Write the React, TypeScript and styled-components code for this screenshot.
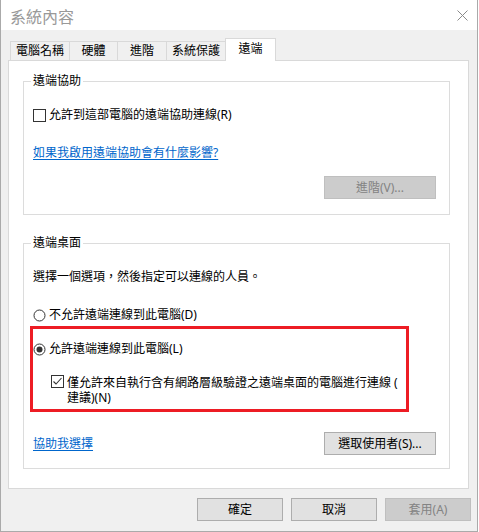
import React from "react";
import styled, { createGlobalStyle } from "styled-components";

const GlobalStyle = createGlobalStyle`
  *, *::before, *::after {
    box-sizing: border-box;
  }
  html, body {
    margin: 0;
    padding: 0;
    background: #ffffff;
  }
  body {
    font-family: "Noto Sans", "Noto Sans CJK TC", sans-serif;
    font-size: 12px;
    color: #000000;
  }
`;

const Window = styled.div`
  width: 478px;
  height: 532px;
  display: flex;
  flex-direction: column;
  border: 1px solid #aaaaaa;
  border-top: none;
  background: #f0f0f0;
`;

const TitleBar = styled.div`
  height: 30px;
  flex: none;
  display: flex;
  align-items: center;
  justify-content: space-between;
  padding: 0 9px 0 9px;
  background: #ffffff;
`;

const Title = styled.div`
  font-size: 16px;
  color: #999999;
  line-height: 20px;
  padding-top: 1px;
  font-family: "Noto Sans CJK TC", sans-serif;
`;

const Body = styled.div`
  flex: 1;
  display: flex;
  flex-direction: column;
  padding: 8px 8px 10px 7px;
`;

const TabRow = styled.div`
  display: flex;
  align-items: flex-end;
  height: 23px;
  margin: 0 0 -1px 2px;
  position: relative;
  z-index: 1;
`;

const Tab = styled.div<{ $active?: boolean; $w: number }>`
  width: ${(p) => p.$w}px;
  height: ${(p) => (p.$active ? 23 : 19)}px;
  margin-bottom: ${(p) => (p.$active ? 0 : 1)}px;
  border: 1px solid #d9d9d9;
  border-bottom: none;
  border-right: ${(p) => (p.$active ? "1px solid #d9d9d9" : "none")};
  background: ${(p) => (p.$active ? "#ffffff" : "#f0f0f0")};
  display: flex;
  align-items: center;
  justify-content: center;
  padding-bottom: ${(p) => (p.$active ? 3 : 0)}px;
  line-height: 16px;
`;

const Panel = styled.div`
  background: #ffffff;
  border: 1px solid #d9d9d9;
  padding: 20px 18px 19px 14px;
`;

const Group = styled.div<{ $pb: number; $mt?: number }>`
  border: 1px solid #dcdcdc;
  padding: 0 13px ${(p) => p.$pb}px 9px;
  margin-top: ${(p) => p.$mt ?? 0}px;
  display: flex;
  flex-direction: column;
`;

const Legend = styled.div`
  width: fit-content;
  height: 16px;
  line-height: 16px;
  margin: -9px 0 0 -2px;
  padding: 0 2px;
  background: #ffffff;
`;

const Row = styled.div<{ $mt: number; $indent?: number }>`
  display: flex;
  align-items: center;
  gap: 3px;
  height: 16px;
  line-height: 16px;
  margin-top: ${(p) => p.$mt}px;
  padding-left: ${(p) => p.$indent ?? 0}px;
  white-space: nowrap;
`;

const Text = styled.div<{ $mt: number }>`
  height: 16px;
  line-height: 16px;
  margin-top: ${(p) => p.$mt}px;
`;

const WrapRow = styled.div`
  display: flex;
  align-items: flex-start;
  gap: 3px;
  margin-top: 18px;
  padding-left: 18px;
  line-height: 15px;
`;

const Link = styled.a`
  color: #0066cc;
  text-decoration: underline;
  text-underline-offset: 2px;
  line-height: 16px;
  cursor: pointer;
`;

const ButtonRow = styled.div<{ $mt: number }>`
  display: flex;
  justify-content: flex-end;
  margin-top: ${(p) => p.$mt}px;
`;

const HelpRow = styled.div`
  display: flex;
  align-items: center;
  justify-content: space-between;
  margin-top: 20px;
`;

const Button = styled.button<{ $w: number; $disabled?: boolean }>`
  width: ${(p) => p.$w}px;
  height: 23px;
  padding: 0;
  font-family: "Noto Sans", "Noto Sans CJK TC", sans-serif;
  font-size: 12px;
  line-height: 16px;
  border: 1px solid ${(p) => (p.$disabled ? "#bfbfbf" : "#adadad")};
  background: ${(p) => (p.$disabled ? "#cccccc" : "#e1e1e1")};
  color: ${(p) => (p.$disabled ? "#838383" : "#000000")};
`;

const RedFrame = styled.div`
  width: 379px;
  border: 3px solid #ed1c24;
  margin: 3px 0 0 -3px;
  padding: 12px 0 4px 0;
`;

const Footer = styled.div`
  display: flex;
  justify-content: flex-end;
  gap: 8px;
  margin: 9px -2px 0 0;
`;

const CheckBox = ({ checked }: { checked?: boolean }) => (
  <svg width="13" height="13" viewBox="0 0 13 13" style={{ flex: "none" }}>
    <rect x="0.5" y="0.5" width="12" height="12" fill="#fff" stroke="#333" />
    {checked && (
      <polyline
        points="2.5,6.5 5,9 10.5,3"
        fill="none"
        stroke="#333"
        strokeWidth="1.1"
      />
    )}
  </svg>
);

const Radio = ({ checked }: { checked?: boolean }) => (
  <svg width="13" height="13" viewBox="0 0 13 13" style={{ flex: "none" }}>
    <circle cx="6.5" cy="6.5" r="5.5" fill="#fff" stroke="#333" />
    {checked && <circle cx="6.5" cy="6.5" r="3" fill="#333" />}
  </svg>
);

const CloseIcon = () => (
  <svg width="11" height="11" viewBox="0 0 11 11">
    <path d="M0.5 0.5 L10.5 10.5 M10.5 0.5 L0.5 10.5" stroke="#8a8a8a" strokeWidth="1" />
  </svg>
);

const tabs = [
  { label: "電腦名稱", w: 59 },
  { label: "硬體", w: 48 },
  { label: "進階", w: 49 },
  { label: "系統保護", w: 59 },
  { label: "遠端", w: 51, active: true },
];

function App() {
  return (
    <>
      <GlobalStyle />
      <Window>
        <TitleBar>
          <Title>系統內容</Title>
          <CloseIcon />
        </TitleBar>
        <Body>
          <TabRow>
            {tabs.map((t) => (
              <Tab key={t.label} $w={t.w} $active={t.active}>
                {t.label}
              </Tab>
            ))}
          </TabRow>
          <Panel>
            <Group $pb={15}>
              <Legend>遠端協助</Legend>
              <Row $mt={18}>
                <CheckBox />
                允許到這部電腦的遠端協助連線(R)
              </Row>
              <Row $mt={22}>
                <Link>如果我啟用遠端協助會有什麼影響?</Link>
              </Row>
              <ButtonRow $mt={15}>
                <Button $w={112} $disabled>
                  進階(V)...
                </Button>
              </ButtonRow>
            </Group>
            <Group $pb={13} $mt={28}>
              <Legend>遠端桌面</Legend>
              <Text $mt={18}>選擇一個選項，然後指定可以連線的人員。</Text>
              <Row $mt={22}>
                <Radio />
                不允許遠端連線到此電腦(D)
              </Row>
              <RedFrame>
                <Row $mt={0}>
                  <Radio checked />
                  允許遠端連線到此電腦(L)
                </Row>
                <WrapRow>
                  <CheckBox checked />
                  <div>
                    僅允許來自執行含有網路層級驗證之遠端桌面的電腦進行連線 (
                    <br />
                    建議)(N)
                  </div>
                </WrapRow>
              </RedFrame>
              <HelpRow>
                <Link>協助我選擇</Link>
                <Button $w={112}>選取使用者(S)...</Button>
              </HelpRow>
            </Group>
          </Panel>
          <Footer>
            <Button $w={86}>確定</Button>
            <Button $w={86}>取消</Button>
            <Button $w={86} $disabled>
              套用(A)
            </Button>
          </Footer>
        </Body>
      </Window>
    </>
  );
}

export default App;
